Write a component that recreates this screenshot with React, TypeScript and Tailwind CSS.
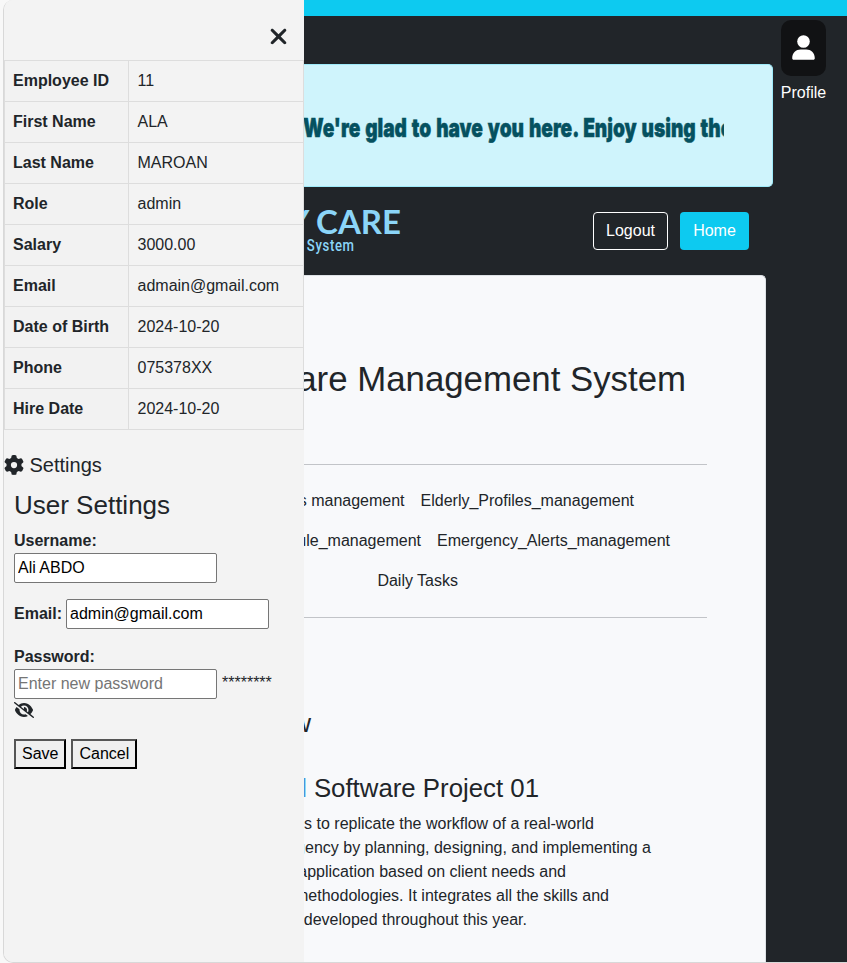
import React from "react";
import { FaXmark, FaGear, FaEyeSlash } from "react-icons/fa6";

const employee: [string, string][] = [
  ["Employee ID", "11"],
  ["First Name", "ALA"],
  ["Last Name", "MAROAN"],
  ["Role", "admin"],
  ["Salary", "3000.00"],
  ["Email", "admain@gmail.com"],
  ["Date of Birth", "2024-10-20"],
  ["Phone", "075378XX"],
  ["Hire Date", "2024-10-20"],
];

const inputClass =
  "h-[30px] w-[203px] rounded-[2px] border border-[#767676] bg-white px-[3px] text-base text-black placeholder:text-[#757575] outline-none";
const buttonClass =
  "h-[30px] border-2 border-t-[#555] border-l-[#555] border-r-black border-b-black bg-[#efefef] px-1.5 text-base leading-none text-black";

function Sidebar() {
  return (
    <aside className="w-[300px] shrink-0 bg-[#f3f3f3]">
      <div className="flex h-[60px] justify-end pt-6 pr-4">
        <FaXmark className="h-[25px] w-[19px]" />
      </div>
      <div className="border-t border-l border-[#ddd]">
        {employee.map(([label, value]) => (
          <div key={label} className="flex h-[41px] border-b border-[#ddd]">
            <div className="w-[123px] bg-[#f2f2f2] p-2 font-bold">{label}</div>
            <div className="flex-1 border-x border-[#ddd] py-2 pr-2 pl-[8.5px]">{value}</div>
          </div>
        ))}
      </div>
      <h5 className="mt-[23px] flex h-6 items-center gap-[5.5px] text-[20px] leading-6">
        <FaGear className="h-5 w-5" />
        Settings
      </h5>
      <div className="px-2.5 pt-3">
        <h3 className="text-[26px] leading-8">User Settings</h3>
        <div className="mt-2">
          <label className="block font-bold">Username:</label>
          <input className={inputClass} defaultValue="Ali ABDO" />
        </div>
        <div className="mt-4 flex items-center gap-1">
          <label className="font-bold">Email:</label>
          <input className={inputClass} defaultValue="admin@gmail.com" />
        </div>
        <div className="mt-4">
          <label className="block font-bold">Password:</label>
          <div className="flex items-center gap-[5px]">
            <input className={inputClass} placeholder="Enter new password" />
            <span className="-mt-0.5">********</span>
          </div>
          <FaEyeSlash className="mt-[3px] h-4 w-5" />
        </div>
        <div className="mt-[21px] flex gap-[5px]">
          <button className={buttonClass}>Save</button>
          <button className={buttonClass}>Cancel</button>
        </div>
      </div>
    </aside>
  );
}

function Banner() {
  return (
    <div className="mt-12 flex h-[123px] w-[469px] items-center rounded-r-[5px] border border-l-0 border-[#9eeaf9] bg-[#cff4fc]">
      <div className="w-[420px] overflow-hidden pt-[5px] text-[#055160]">
        <p className="-ml-px h-8 w-max origin-left scale-x-[0.735] font-['Inter'] text-[26px] leading-8 font-black whitespace-nowrap [-webkit-text-stroke:0.5px_#055160] [word-spacing:1.5px]">
          We're glad to have you here. Enjoy using the system!
        </p>
      </div>
    </div>
  );
}

function Header() {
  return (
    <header className="flex h-[88px] justify-between pr-[98px]">
      <div className="flex w-[97px] flex-col items-end overflow-hidden pt-4 whitespace-nowrap text-[#8bd5f8]">
        <div className="font-['Lato'] text-[33px] leading-9 font-bold">ELDERLY CARE</div>
        <div className="mr-[46px] -mt-px origin-right scale-x-[0.82] font-['Roboto'] text-[16px] leading-4 font-medium tracking-[0.8px] [word-spacing:3px]">
          Management System
        </div>
      </div>
      <div className="flex gap-3 pt-[25px]">
        <button className="h-[38px] w-[75px] rounded border border-white text-white">Logout</button>
        <button className="h-[38px] w-[69px] rounded bg-[#0dcaf0] text-white">Home</button>
      </div>
    </header>
  );
}

function Content() {
  return (
    <section className="w-[462px] flex-1 overflow-hidden rounded-tr-[5px] border-t border-r border-[#dee2e6] bg-[#f8f9fb] whitespace-nowrap">
      <h1 className="mt-[79px] flex h-12 items-center justify-end pr-[79px] text-[34.8px]">
        Elderly Care Management System
      </h1>
      <nav className="mt-[61px] mr-[58px] border-y border-[#c2c4c8] py-4">
        <div className="flex h-10 items-center justify-end gap-4 pr-[73px]">
          <span>Users management</span>
          <span>Elderly_Profiles_management</span>
        </div>
        <div className="flex h-10 items-center justify-end gap-4 pr-[37px]">
          <span>Schedule_management</span>
          <span>Emergency_Alerts_management</span>
        </div>
        <div className="flex h-10 items-center justify-end pr-[249px]">Daily Tasks</div>
      </nav>
      <div className="mt-[89px] flex w-[7px] justify-end text-[26px] leading-8">Overview</div>
      <h3 className="mt-[33px] flex w-[235px] justify-end text-[25.8px] leading-8">
        <span className="text-[#4796dc]">Final</span>
        <span className="ml-[7px]">Software Project 01</span>
      </h3>
      <div className="mt-2 leading-6">
        <p className="flex w-[290px] justify-end">This project aims to replicate the workflow of a real-world</p>
        <p className="flex w-[347px] justify-end">software agency by planning, designing, and implementing a</p>
        <p className="flex w-[262px] justify-end">complete application based on client needs and</p>
        <p className="flex w-[305px] justify-end">modern methodologies. It integrates all the skills and</p>
        <p className="flex w-[223px] justify-end">knowledge developed throughout this year.</p>
      </div>
    </section>
  );
}

export default function App() {
  return (
    <div className="h-[963px] overflow-hidden bg-[#f8f8f8] pl-[3px] font-['Liberation_Sans',Arial,sans-serif] text-base leading-6 text-[#212529]">
      <div className="flex h-full overflow-hidden rounded-l-[10px] border-b border-l border-[#d8d8d8]">
        <Sidebar />
        <main className="flex min-w-0 flex-1 flex-col bg-[#212529]">
          <div className="h-4 shrink-0 bg-[#0dcaf0]" />
          <div className="flex shrink-0">
            <Banner />
            <div className="ml-2 flex w-[45px] flex-col items-center pt-1 text-white">
              <button className="flex h-14 w-[45px] items-center justify-center rounded-[10px] bg-[#111214]">
                <svg viewBox="0 0 23 25" className="-mt-0.5 h-[25px] w-[23px]" fill="currentColor">
                  <circle cx="11.5" cy="6.5" r="6.3" />
                  <path d="M0.2 23.2C0.2 18 4.2 14.6 8.6 14.6h5.8c4.4 0 8.4 3.4 8.4 8.6 0 0.9-0.6 1.5-1.5 1.5H1.7c-0.9 0-1.5-0.6-1.5-1.5Z" />
                </svg>
              </button>
              <span className="mt-[5px]">Profile</span>
            </div>
          </div>
          <Header />
          <Content />
        </main>
      </div>
    </div>
  );
}
